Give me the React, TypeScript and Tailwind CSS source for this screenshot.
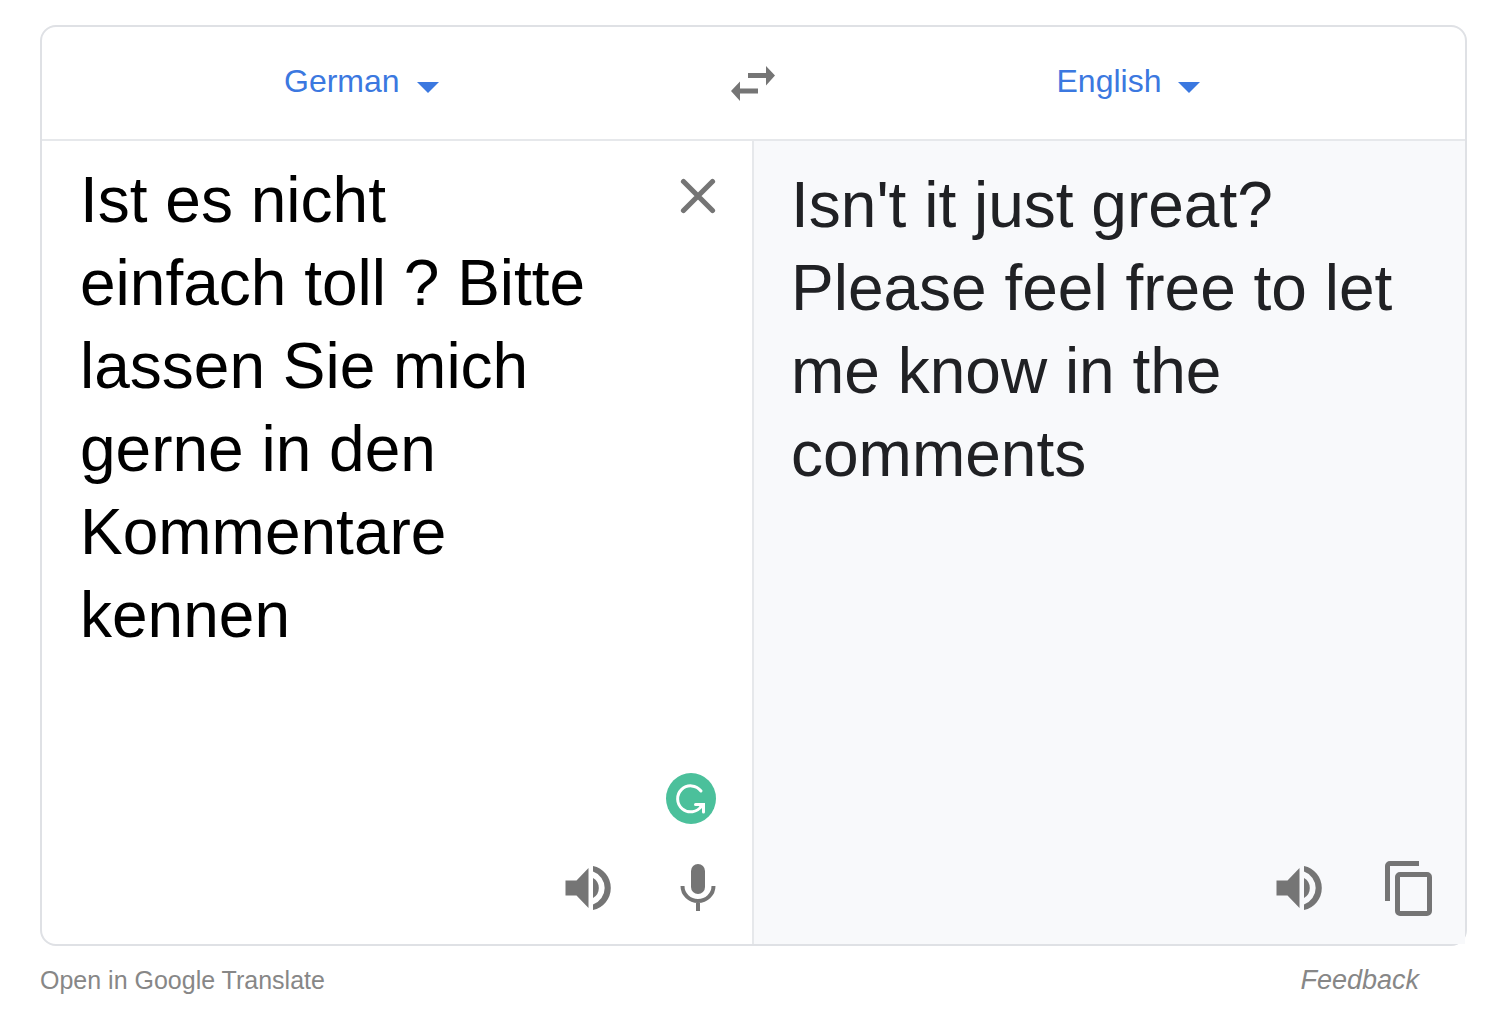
import React, { useState } from "react";

const SOURCE = "Ist es nicht einfach toll ? Bitte lassen Sie mich gerne in den Kommentare kennen";

function LanguageSelect({ label, value, width }: { label: string; value: string; width: string }) {
  return (
    <div className="relative flex items-center">
      <select
        aria-label={label}
        defaultValue={value}
        className={`${width} cursor-pointer appearance-none bg-transparent text-[32px] leading-10 text-[#3b78e0] outline-none`}
      >
        <option>{value}</option>
      </select>
      <svg className="pointer-events-none absolute right-0 top-[21px] h-[11px] w-[22px] fill-[#3b78e0]" viewBox="0 0 22 11" aria-hidden="true">
        <path d="M0 0h22L11 11z" />
      </svg>
    </div>
  );
}

function SpeakerIcon() {
  return (
    <svg className="h-[44px] w-[46px] fill-[#757575]" viewBox="0 0 46 44" aria-hidden="true">
      <path d="M0.500 14.500v15h11l12 12.500V2L11.500 14.500z" />
      <path d="M28 12v20a11.500 11.500 0 0 0 0-20z" />
      <path d="M28 0v5.500a17.500 17.500 0 0 1 0 33v5.500a22.500 22.500 0 0 0 0-44z" />
    </svg>
  );
}

export default function App() {
  const [text, setText] = useState(SOURCE);
  return (
    <main className="bg-white pl-10 pr-[33px] pt-[25px] font-['Liberation_Sans',Arial,sans-serif]">
      <section className="rounded-2xl border-2 border-[#dfe1e5]">
        <header className="grid h-[114px] grid-cols-[689fr_44px_690fr] items-center border-b-2 border-[#e6e8eb]">
          <div className="flex justify-center pb-1 pr-[50px]">
            <LanguageSelect label="Source language" value="German" width="w-[155px]" />
          </div>
          <button aria-label="Swap languages">
            <svg className="h-[35px] w-11 fill-[#757575]" viewBox="0 0 44 35" aria-hidden="true">
              <path d="M17 7h18V0l9 9.500-9 10V12H17zM27 27.500H9V35l-9-10 9-9.500v7h18z" />
            </svg>
          </button>
          <div className="flex justify-center pb-1 pl-4">
            <LanguageSelect label="Target language" value="English" width="w-[143px]" />
          </div>
        </header>
        <div className="grid min-h-[803px] grid-cols-[710fr_713fr]">
          <div className="flex flex-col pl-[38px] pr-9 pt-[18px]">
            <div className="flex flex-1 items-start justify-between">
              <textarea
                aria-label="Source text"
                value={text}
                onChange={(e) => setText(e.target.value)}
                rows={7}
                className="w-[520px] resize-none overflow-hidden bg-transparent text-[64px] leading-[83px] text-black outline-none"
              />
              <button aria-label="Clear text" className="mt-[19px]" onClick={() => setText("")}>
                <svg className="h-9 w-9 stroke-[#757575]" viewBox="0 0 36 36" strokeWidth="5.200" strokeLinecap="round" aria-hidden="true">
                  <path d="M3.500 3.500l29 29M32.500 3.500L3.500 32.500" />
                </svg>
              </button>
            </div>
            <button aria-label="Grammarly" className="self-end">
              <svg className="h-[51px] w-[50px]" viewBox="0 0 50 51" fill="none" aria-hidden="true">
                <ellipse cx="25" cy="25.500" rx="25" ry="25.500" fill="#4bc09b" />
                <path d="M35 18A13 13 0 1 0 35.500 33M29.500 31.500h8v7.500" stroke="white" strokeWidth="3" strokeLinecap="round" />
                <path d="M32 32h5v4.500z" fill="white" />
              </svg>
            </button>
            <div className="mb-8 mt-10 flex items-center justify-end gap-[69px]">
              <button aria-label="Listen to source"><SpeakerIcon /></button>
              <button aria-label="Speak">
                <svg className="h-12 w-9" viewBox="0 0 36 48" fill="none" stroke="#757575" strokeWidth="4" aria-hidden="true">
                  <rect x="11" y="0" width="14" height="30" rx="7" fill="#757575" stroke="none" />
                  <path d="M2.500 22a15.500 15 0 0 0 31 0M18 37v10" />
                </svg>
              </button>
            </div>
          </div>
          <div className="flex flex-col border-l-2 border-[#e6e8eb] bg-[#f8f9fb] pl-[37px] pr-[33px] pt-[23px]">
            <p className="flex-1 text-[64px] leading-[83px] text-[#202124]">
              Isn't it just great? Please feel free to let me know in the comments
            </p>
            <div className="mb-7 flex items-center justify-end gap-[62px]">
              <button aria-label="Listen to translation"><SpeakerIcon /></button>
              <button aria-label="Copy translation">
                <svg className="h-14 w-12" viewBox="0 0 48 56" fill="none" stroke="#757575" strokeWidth="5" aria-hidden="true">
                  <path d="M35 3.500H6a2.500 2.500 0 0 0-2.500 2.500v35" />
                  <rect x="13.500" y="14.500" width="32" height="39" rx="2.500" />
                </svg>
              </button>
            </div>
          </div>
        </div>
      </section>
      <footer className="mt-[18px] flex items-start justify-between pr-12 text-[#878787]">
        <a href="#translate" className="text-[25px] leading-8">Open in Google Translate</a>
        <a href="#feedback" className="text-[27px] italic leading-8">Feedback</a>
      </footer>
    </main>
  );
}
